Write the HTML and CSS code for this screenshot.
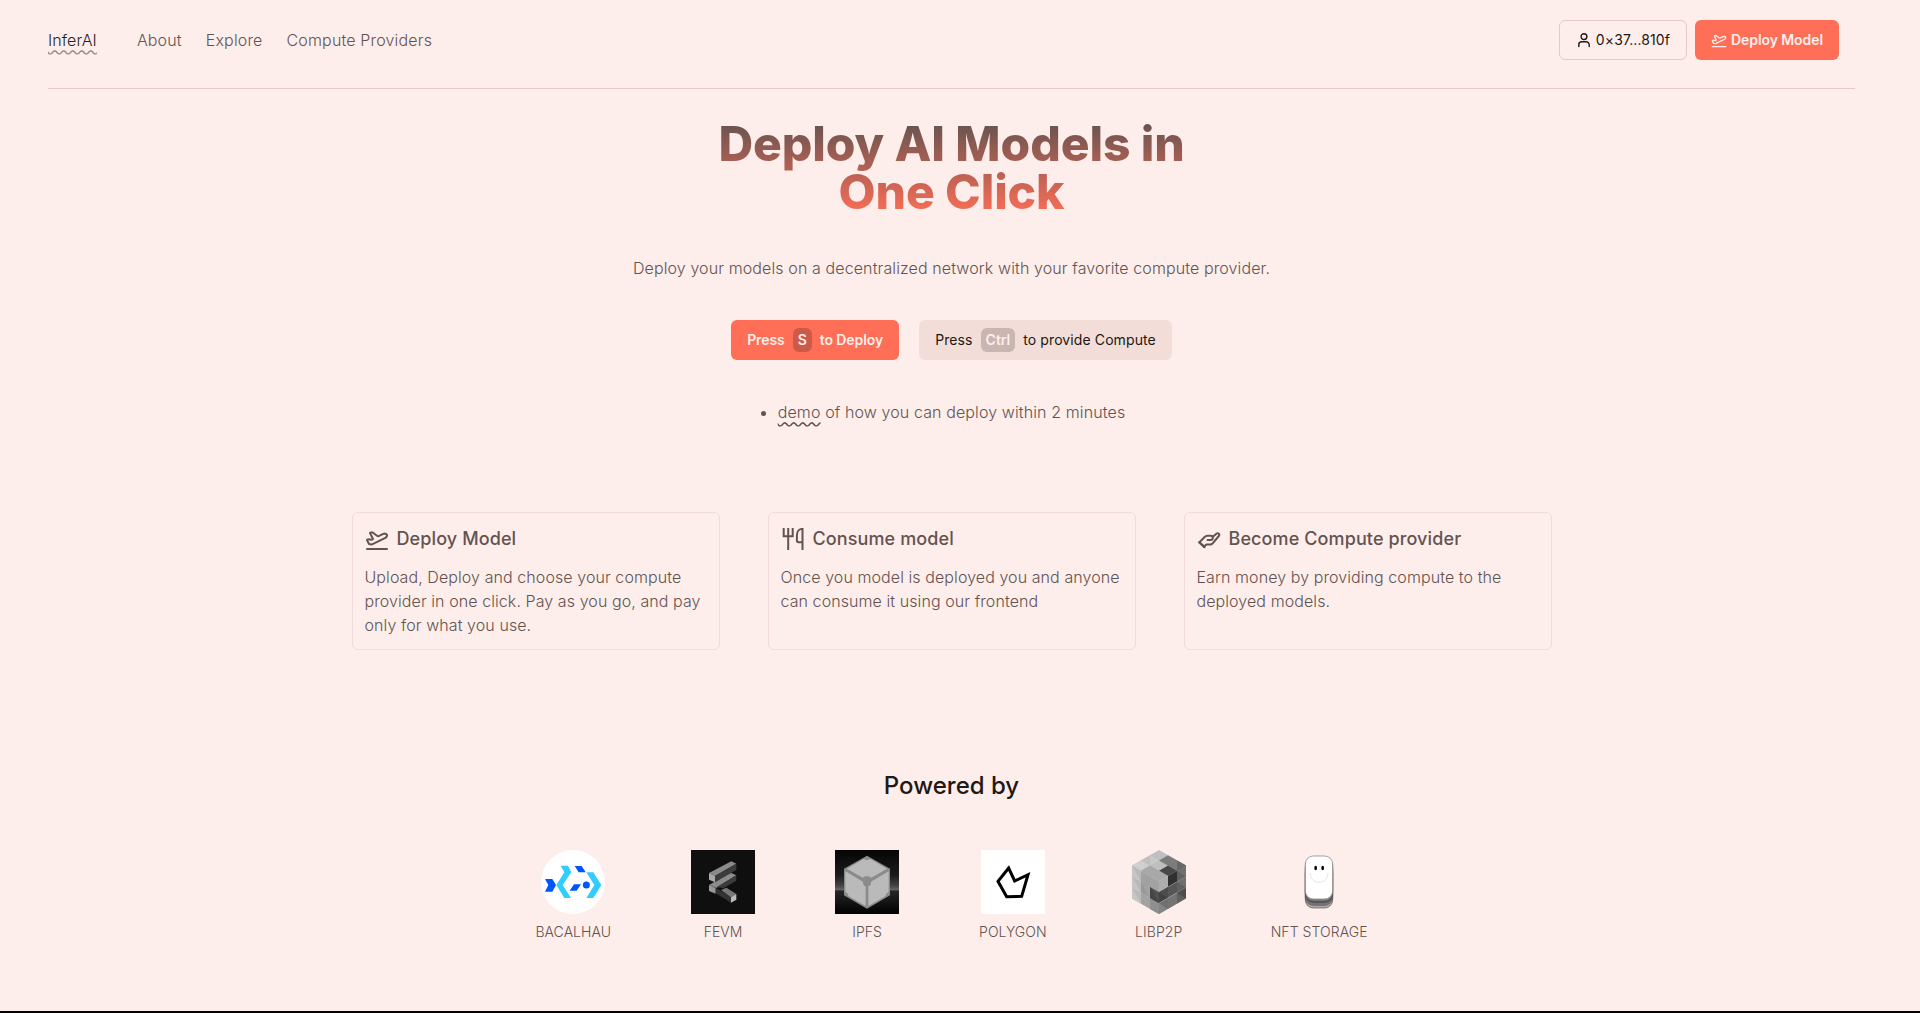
FILE: index.html
```html
<!DOCTYPE html>
<html lang="en">
<head>
<meta charset="utf-8">
<title>InferAI</title>
<link rel="stylesheet" href="styles.css">
</head>
<body>
<svg class="defs" width="0" height="0" aria-hidden="true">
  <symbol id="plane" viewBox="0 0 24 24">
    <path d="M2 22h20"/>
    <path d="M6.36 17.4 4 17l-2-4 1.1-.55a2 2 0 0 1 1.8 0l.17.1a2 2 0 0 0 1.8 0L8 12 5 6l.9-.45a2 2 0 0 1 2.09.2l4.02 3a2 2 0 0 0 2.1.2l4.19-2.06a2.41 2.41 0 0 1 1.73-.17L21 7a1.4 1.4 0 0 1 .87 1.99l-.38.76c-.23.46-.6.84-1.07 1.08L7.58 17.2a2 2 0 0 1-1.22.18Z"/>
  </symbol>
</svg>
<div class="page">
  <header class="header">
    <a class="brand">InferAI</a>
    <nav class="nav"><a>About</a><a>Explore</a><a>Compute Providers</a></nav>
    <div class="actions">
      <button class="btn btn-outline">
        <svg class="icon-sm user" viewBox="0 0 16 16"><circle cx="8" cy="4.6" r="2.9"/><path d="M2.8 14.6v-1.8a3 3 0 0 1 3-3h4.4a3 3 0 0 1 3 3v1.8"/></svg>
        <span>0×37...810f</span>
      </button>
      <button class="btn btn-primary"><svg class="icon-sm"><use href="#plane"/></svg><span>Deploy Model</span></button>
    </div>
  </header>

  <main class="main">
    <section class="hero">
      <h1>Deploy AI Models in<br>One Click</h1>
      <p class="lead">Deploy your models on a decentralized network with your favorite compute provider.</p>
      <div class="cta">
        <button class="btn btn-primary">Press <kbd>S</kbd> to Deploy</button>
        <button class="btn btn-soft">Press <kbd>Ctrl</kbd> to provide Compute</button>
      </div>
      <ul class="demo"><li><a>demo</a> of how you can deploy within 2 minutes</li></ul>
    </section>

    <section class="cards">
      <article class="card">
        <h2><svg class="icon"><use href="#plane"/></svg>Deploy Model</h2>
        <p>Upload, Deploy and choose your compute provider in one click. Pay as you go, and pay only for what you use.</p>
      </article>
      <article class="card">
        <h2><svg class="icon sharp" viewBox="0 0 24 24"><path d="M2.7 1v8.2h9V1M7.2 1v22M21.5 23V1.9h-1.2c-2.6 0-4.4 3.2-4.4 7.2v4.4c0 1 .8 1.8 1.8 1.8h3.8"/></svg>Consume model</h2>
        <p>Once you model is deployed you and anyone can consume it using our frontend</p>
      </article>
      <article class="card">
        <h2><svg class="icon" viewBox="0 0 24 24"><path d="M2.5 15.2 7.6 10c.9-.9 1.7-1.3 2.8-1.3h3.4c1.1 0 1.8.5 1.8 1.3l3.8-3.2c.8-.7 1.8-.7 2.4 0 .6.6.6 1.5 0 2.2l-5.9 7.1c-.8 1-1.8 1.5-3 1.5H9.4l-2.6 2.2"/><path d="M10.5 13h3c1.5 0 2.3-.9 2.3-2.2V10"/><path stroke-width="2.4" d="m2.3 15.4 5.2 4.6"/></svg>Become Compute provider</h2>
        <p>Earn money by providing compute to the deployed models.</p>
      </article>
    </section>

    <section class="powered">
      <h3>Powered by</h3>
      <div class="logos">
        <figure>
          <svg class="logo" viewBox="0 0 192 192"><circle cx="96" cy="96" r="96" fill="#fff"/><g fill="#0055ff"><path d="M12 87h22l11 18-11 20H12l10-20zM101 48h21l12 19h-21zM99 103h21l-13 19H86z"/><circle cx="136" cy="105" r="10.5"/></g><path fill="#33ccff" d="M59 47h22l10 20-26 38 25 39H70l-24-39 24-38zM136 67h21l24 38-24 39h-21l24-39z"/></svg>
          <figcaption>BACALHAU</figcaption>
        </figure>
        <figure>
          <svg class="logo" viewBox="0 0 192 192"><path fill="#0f0f0f" d="M0 0h192v192H0z"/><path fill="#8b8b8b" d="M54 69l67-35 15 7-64 37zM54 105l65-37 17 8-60 38z"/><path fill="#a9a9a9" d="M54 69l18 9v19l-18-8z"/><path fill="#3b3b3b" d="M72 78l64-37v19L72 97zM76 112l60-36v16l-38 22z"/><path fill="#999" d="M54 105l20 9v17l-20-8z"/><path fill="#333" d="M74 113l46 28v17l-46-28z"/><path fill="#787878" d="M90 120l16-7 30 19-16 10z"/><path fill="#bcbcbc" d="M120 142l16-10v17l-16 9z"/></svg>
          <figcaption>FEVM</figcaption>
        </figure>
        <figure>
          <svg class="logo" viewBox="0 0 192 192"><defs><linearGradient id="space" x2="0" y2="1"><stop stop-color="#050505"/><stop offset=".4" stop-color="#1c1c1c"/><stop offset=".56" stop-color="#444"/><stop offset=".62" stop-color="#666"/><stop offset=".64" stop-color="#262626"/><stop offset="1" stop-color="#000"/></linearGradient></defs><path fill="url(#space)" d="M0 0h192v192H0z"/><path fill="#8b8b8b" d="M96 17l69 39v80l-69 40-69-40V56z"/><path fill="#bababa" d="M36 56l50-29q10 7 20 0l50 29-47 27q-13-8-26 0zM31 64l53 31q-1 10 8 14v59l-52-30q0-9-9-12zM161 64l-53 31q1 10-8 14v59l52-30q0-9 9-12z"/></svg>
          <figcaption>IPFS</figcaption>
        </figure>
        <figure>
          <svg class="logo" viewBox="0 0 192 192"><path fill="#fff" d="M0 0h192v192H0z"/><path fill="none" stroke="#000" stroke-width="9" d="M83 54L51 94l26 46 45-1 19-65-40 19z"/></svg>
          <figcaption>POLYGON</figcaption>
        </figure>
        <figure>
          <svg class="logo" viewBox="0 0 192 192">
            <g transform="matrix(27 15.6 -27 15.6 96 0)"><path fill="#bfbfbf" d="M0 0h3v3H0z"/><path fill="#7c7c7c" d="M1 0h2v1H1z"/><path fill="#484848" d="M2 1h1v1H2z"/><path fill="#cfcfcf" d="M0 2h1v1H0z"/><path fill="#a8a8a8" d="M1 2h2v1H1z"/><path fill="#c8c8c8" d="M0 1h1v1z"/><path fill="#686868" d="M2 0h1v1z"/></g>
            <g transform="matrix(27 15.6 0 33 15 46.6)"><path fill="#b9b9b9" d="M0 0h1v3H0z"/><path fill="#a2a2a2" d="M1 0h2v3H1z"/><path fill="#505050" d="M2 1h1v1H2z"/><path fill="#8f8f8f" d="M2 2h1v1H2z"/><path fill="#c6c6c6" d="M0 0v1h1zM0 1v1h1zM0 2v1h1z"/><path fill="#999" d="M1 1v1h1z"/><path fill="#444" d="M2 1v1h1z"/></g>
            <g transform="matrix(27 -15.6 0 33 96 93.4)"><path fill="#adadad" d="M0 0h1v1H0z"/><path fill="#303030" d="M1 0h1v1H1z"/><path fill="#606060" d="M2 0h1v3H2z"/><path fill="#424242" d="M0 1h1v1H0z"/><path fill="#575757" d="M1 1h1v1H1z"/><path fill="#848484" d="M0 2h1v1H0z"/><path fill="#747474" d="M1 2h1v1H1z"/><path fill="#707070" d="M2 0h1v1zM2 1h1v1zM0 2h1v1z"/><path fill="#4d4d4d" d="M0 1h1v1zM2 2h1v1z"/></g>
            <path fill="none" stroke="#ccc" stroke-width="1.3" opacity=".6" d="M15 79.5l27 15.6M15 112.5l54 31.2M177 79.5l-54 31.2M177 112.5l-81 46.8"/>
          </svg>
          <figcaption>LIBP2P</figcaption>
        </figure>
        <figure>
          <svg class="logo" viewBox="0 0 192 192"><g stroke="#555" stroke-width="2"><rect x="55" y="46" width="82" height="128" rx="24" fill="#aaa"/><rect x="55" y="36" width="82" height="130" rx="24" fill="#777"/><rect x="55" y="28" width="82" height="130" rx="24" fill="#555"/><rect x="55" y="23" width="82" height="130" rx="24" fill="#888"/><rect x="55" y="18" width="82" height="129" rx="24" fill="#fff" stroke="#777"/></g><path fill="none" stroke="#ddd" stroke-width="2.5" d="M69 69c0 16 12 28 27 28s27-12 27-28"/><ellipse cx="86" cy="54" rx="4" ry="7"/><ellipse cx="107" cy="54" rx="4" ry="7"/></svg>
          <figcaption>NFT STORAGE</figcaption>
        </figure>
      </div>
    </section>
  </main>
</div>
<div class="bottom-bar"></div>
</body>
</html>
```
FILE: styles.css
```css
* { box-sizing: border-box; }
html { overflow: hidden; }
body {
  margin: 0;
  height: 1013px;
  display: flex;
  flex-direction: column;
  background: #fdeeec;
  color: #635350;
  font: 300 16px/24px Inter, "Liberation Sans", sans-serif;
  letter-spacing: 0.11px;
}
h1, h2, h3, p, ul, figure { margin: 0; padding: 0; }
.defs { position: absolute; }
.page { flex: 1; width: 1903px; padding: 0 48px; }
.bottom-bar { height: 2px; background: #000; }

.header {
  display: flex;
  align-items: center;
  height: 89px;
  padding: 0 16px 8px 0;
  border-bottom: 1px solid #e6c8c6;
}
.brand {
  color: #2b1f1d;
  text-decoration: underline wavy #a38e8b;
  text-underline-offset: 3px;
}
.nav { display: flex; gap: 24px; margin-left: 40px; letter-spacing: 0.16px; }
.actions { display: flex; gap: 8px; margin-left: auto; }

.btn {
  display: flex;
  align-items: center;
  height: 40px;
  padding: 0 16px;
  border: 0;
  border-radius: 6px;
  font: 400 14px/20px Inter, "Liberation Sans", sans-serif;
  letter-spacing: 0.1px;
  color: #211715;
}
.btn-outline { border: 1px solid #e6c8c6; background: none; gap: 4px; }
.btn-primary {
  background: #ff6e56;
  color: #fdeeec;
  font-weight: 600;
  letter-spacing: -0.08px;
  gap: 4px;
}
.btn-soft { background: #f2ddd8; }
.icon, .icon-sm {
  flex: none;
  fill: none;
  stroke: currentColor;
  stroke-width: 2;
  stroke-linecap: round;
  stroke-linejoin: round;
}
.icon { width: 24px; height: 24px; }
.icon-sm { width: 16px; height: 16px; }
.user { stroke-width: 1.4; }
.sharp { stroke-linecap: butt; stroke-linejoin: miter; }

.main { display: flex; flex-direction: column; align-items: center; }
.hero { display: flex; flex-direction: column; align-items: center; padding-top: 31px; }
h1 {
  font-size: 48px;
  line-height: 48px;
  font-weight: 800;
  letter-spacing: -0.1px;
  text-align: center;
  color: transparent;
  background: linear-gradient(#635350, #ff6e56);
  -webkit-background-clip: text;
  background-clip: text;
}
.lead { margin-top: 40px; }
.cta { display: flex; gap: 20px; margin-top: 40px; }
.cta .btn { gap: 8px; }
kbd {
  height: 24px;
  padding: 2px 5px;
  border-radius: 6px;
  background: #cc5a48;
  color: #fdeeec;
  font: inherit;
  font-weight: 600;
}
.btn-soft kbd { background: #c9b5b2; letter-spacing: 0; }
.demo { margin-top: 40px; }
.demo a { text-decoration: underline wavy #635350; text-underline-offset: 3px; }

.cards { display: grid; grid-template-columns: repeat(3, 368px); gap: 48px; margin-top: 88px; }
.card { height: 138px; padding: 12px; border: 1px solid #f0dbda; border-radius: 6px; }
.card p { letter-spacing: 0.08px; }
.card h2 {
  display: flex;
  align-items: center;
  gap: 8px;
  margin-bottom: 12px;
  font-size: 18px;
  line-height: 28px;
  font-weight: 500;
}

.powered { display: flex; flex-direction: column; align-items: center; margin-top: 120px; }
.powered h3 {
  color: #211715;
  font-size: 24px;
  line-height: 32px;
  font-weight: 500;
  letter-spacing: 0;
}
.logos { display: flex; gap: 80px; margin-top: 48px; }
figure { display: flex; flex-direction: column; align-items: center; gap: 8px; }
.logo { width: 64px; height: 64px; display: block; }
figcaption { font-size: 14px; line-height: 20px; letter-spacing: 0.06px; }
```
